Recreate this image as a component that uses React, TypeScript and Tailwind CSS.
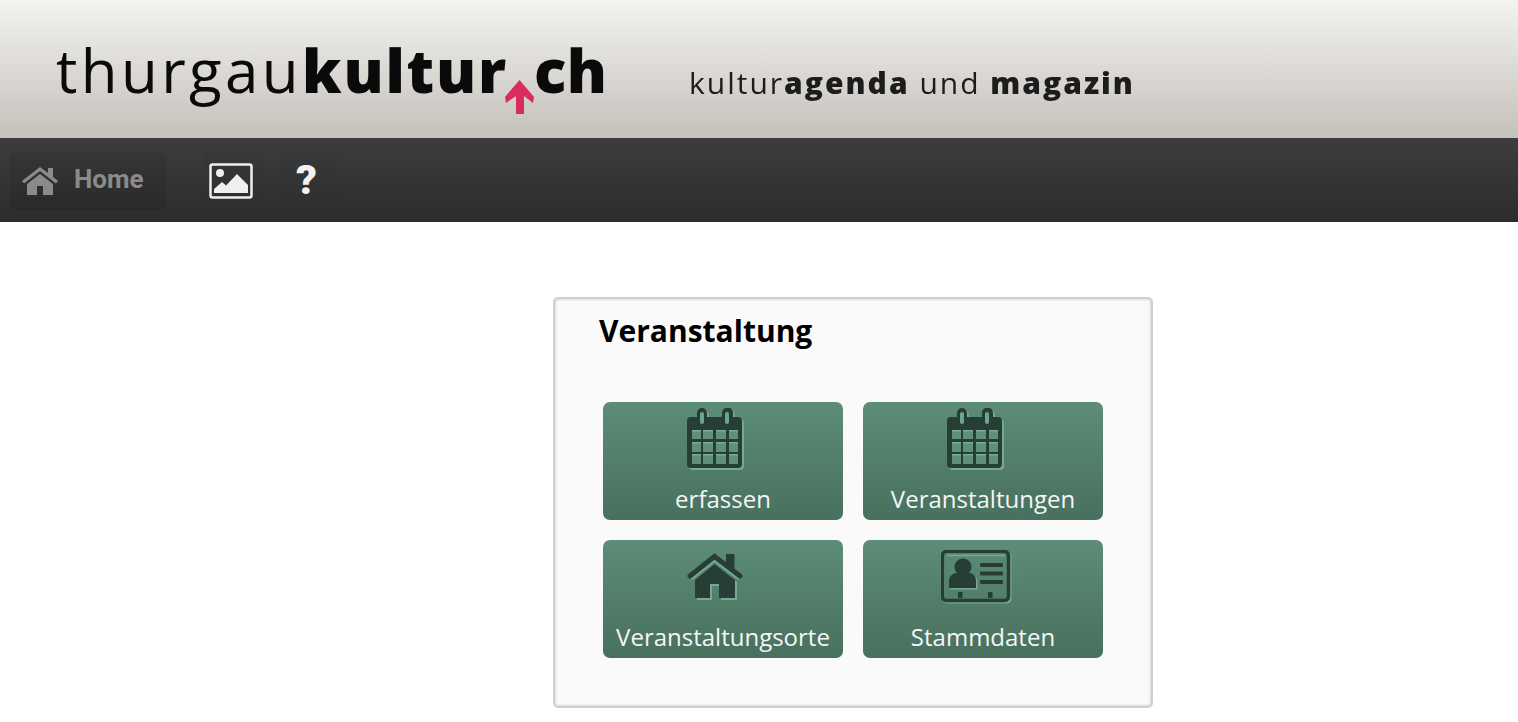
import React from "react";

const DARK = "#263e35";
const LIGHT = "#78a993";

function CalendarShape({ color, cell }: { color: string; cell?: boolean }) {
  const xs = [5, 16, 29, 42];
  const ws = [9, 10, 10, 9];
  const ys = [22, 34, 46];
  const hs = [9, 10, 10];
  return (
    <g>
      <path
        fill={color}
        d="M4 9h6V5a5 5 0 0 1 10 0v4h15V5a5.5 5.500 0 0 1 11 0v4h5a4 4 0 0 1 4 4v43a4 4 0 0 1-4 4H4a4 4 0 0 1-4-4V13a4 4 0 0 1 4-4z"
      />
      {cell && (
        <>
          <rect x="13" y="4" width="4" height="12" rx="2" fill="#6ea58d" />
          <rect x="38" y="4" width="4" height="12" rx="2" fill="#6ea58d" />
          {ys.map((y, r) =>
            xs.map((x, c) => (
              <g key={`${r}-${c}`}>
                <rect x={x} y={y} width={ws[c]} height={hs[r]} fill="#5f9079" />
                <rect x={x} y={y} width={ws[c]} height="1.5" fill="#7faa96" />
              </g>
            ))
          )}
        </>
      )}
    </g>
  );
}

function CalendarIcon() {
  return (
    <svg width="60" height="64" viewBox="0 0 60 64" className="block">
      <g transform="translate(2 2)">
        <CalendarShape color={LIGHT} />
      </g>
      <CalendarShape color={DARK} cell />
    </svg>
  );
}

function HouseIcon() {
  const body = "M8 27 27.500 11 48 27v18H32V31H23v14H8z";
  return (
    <svg width="60" height="48" viewBox="0 0 60 48" className="block">
      <path d={body} fill={LIGHT} transform="translate(2 2)" />
      <path d={body} fill={DARK} />
      <path d="M4.500 26 27.500 7.500 52 26" fill="none" stroke={LIGHT} strokeWidth="2.500" />
      <path d="M3 23 27.500 3.500 53 23" fill="none" stroke={DARK} strokeWidth="5" strokeLinecap="round" />
      <path d="M39 1h8.500v15L39 10z" fill={DARK} />
    </svg>
  );
}

function CardIcon() {
  return (
    <svg width="72" height="56" viewBox="0 0 72 56" className="block">
      <rect x="2.500" y="2.500" width="67" height="50" rx="4" fill="none" stroke={LIGHT} strokeWidth="2" />
      <rect x="1.500" y="1.500" width="66" height="49" rx="4" fill="none" stroke={DARK} strokeWidth="3.500" />
      <path d="M6 5.500h58" stroke={LIGHT} strokeWidth="1.500" />
      <circle cx="22" cy="17" r="8.500" fill={DARK} />
      <path d="M8 38V31c0-5 4-8 8-8h1c2 1.500 8 1.500 10 0h1c4 0 7 3 7 8v7z" fill={LIGHT} transform="translate(1.500 1.500)" />
      <path d="M8 38V31c0-5 4-8 8-8h1c2 1.500 8 1.500 10 0h1c4 0 7 3 7 8v7z" fill={DARK} />
      <rect x="39" y="13" width="23" height="4" rx="1" fill={DARK} />
      <rect x="39" y="21.500" width="23" height="4" rx="1" fill={DARK} />
      <rect x="39" y="30" width="23" height="4" rx="1" fill={DARK} />
      <rect x="17" y="42" width="4.500" height="6" fill={DARK} />
      <rect x="47" y="42" width="4.500" height="6" fill={DARK} />
    </svg>
  );
}

function Tile({ label, icon, iconClass }: { label: string; icon: React.ReactNode; iconClass: string }) {
  return (
    <div className="relative h-[118px] w-[240px] overflow-hidden rounded-[7px] bg-gradient-to-b from-[#5d8d76] to-[#48705e] font-['Open_Sans',sans-serif] text-white">
      <div className={iconClass}>{icon}</div>
      <div className="absolute inset-x-0 bottom-[5px] text-center text-[24px] leading-[32px] text-[#f4f6f5]">{label}</div>
    </div>
  );
}

export default function App() {
  return (
    <div className="min-h-[722px] bg-white">
      <header className="flex h-[138px] items-start bg-gradient-to-b from-[#f4f3f1] to-[#c5c1bb] pl-[56px]">
        <div className="relative mt-[29px] w-[633px] whitespace-nowrap font-['Open_Sans',sans-serif] text-[60px] leading-[82px] text-[#0a0a0a] blur-[0.6px]">
          <span className="font-medium tracking-[3.4px]">thurgau</span>
          <span className="font-extrabold tracking-[1.8px]">kultur</span>
          <span className="ml-[26px] font-extrabold tracking-[0.5px]">ch</span>
          <svg className="absolute left-[449px] top-[51px]" width="29" height="35" viewBox="0 0 29 35">
            <path d="M14.500 0 29 17 28 23 19 16V34H11V16L1 23 0 17z" fill="#d92b5c" />
          </svg>
        </div>
        <div className="mt-[62px] whitespace-nowrap font-['Open_Sans',sans-serif] text-[30px] leading-[42px] tracking-[2px] text-[#1c1c1c] blur-[0.4px]">
          <span>kultur</span>
          <span className="font-extrabold">agenda</span>
          <span> und </span>
          <span className="font-extrabold">magazin</span>
        </div>
      </header>

      <nav className="flex h-[84px] items-start bg-gradient-to-b from-[#3d3d3d] to-[#2c2c2c] pl-[10px] pt-[14px]">
        <div className="flex h-[58px] w-[157px] items-center rounded-[5px] bg-gradient-to-b from-[#363636] to-[#2a2a2a] pl-[11px] font-['Roboto',sans-serif] text-[26px] font-bold text-[#8b8b8b]">
          <svg width="38" height="32" viewBox="0 0 38 32" className="-mt-[1px]">
            <path d="M1 16 19 2 27 8V3h5v9l5 4-2 2.500L19 6 3 18.500z" fill="#8b8b8b" />
            <path d="M6 19 19 9l13 10v11H22V21h-6v9H6z" fill="#8b8b8b" />
          </svg>
          <span className="ml-[15px] -mt-[3px]">Home</span>
        </div>
        <div className="ml-[37px] flex h-[58px] w-[59px] items-center justify-center rounded-[5px] bg-gradient-to-b from-[#383838] to-[#2e2e2e] pr-[5px]">
          <svg width="44" height="36" viewBox="0 0 44 36">
            <rect x="1.500" y="1.500" width="41" height="33" rx="2" fill="none" stroke="#efefef" strokeWidth="2.500" />
            <circle cx="11" cy="10" r="4" fill="#efefef" />
            <path d="M5 30v-4l8-7 4 3.500L28 11l11 11v8z" fill="#efefef" />
          </svg>
        </div>
        <div className="ml-[17px] flex h-[58px] w-[58px] items-center justify-center rounded-[5px] bg-gradient-to-b from-[#383838] to-[#2e2e2e] pr-[5px] font-['Roboto',sans-serif] text-[41px] font-black text-[#f2f2f2]">
          ?
        </div>
      </nav>

      <main className="pl-[553px] pt-[75px]">
        <section className="h-[411px] w-[600px] rounded-[5px] border-2 border-[#cfcfcf] bg-[#fafafa] pl-[44px] pr-[48px] shadow-[inset_0_0_3px_rgba(0,0,0,0.25)]">
          <h1 className="mt-[12px] font-['Open_Sans',sans-serif] text-[30px] font-bold leading-[40px] text-black">Veranstaltung</h1>
          <div className="mt-[51px] ml-[4px] grid w-[500px] grid-cols-[240px_240px] gap-x-[20px] gap-y-[20px]">
            <Tile label="erfassen" icon={<CalendarIcon />} iconClass="absolute left-[84px] top-[6px]" />
            <Tile label="Veranstaltungen" icon={<CalendarIcon />} iconClass="absolute left-[84px] top-[6px]" />
            <Tile label="Veranstaltungsorte" icon={<HouseIcon />} iconClass="absolute left-[84px] top-[13px]" />
            <Tile label="Stammdaten" icon={<CardIcon />} iconClass="absolute left-[78px] top-[10px]" />
          </div>
        </section>
      </main>
    </div>
  );
}
